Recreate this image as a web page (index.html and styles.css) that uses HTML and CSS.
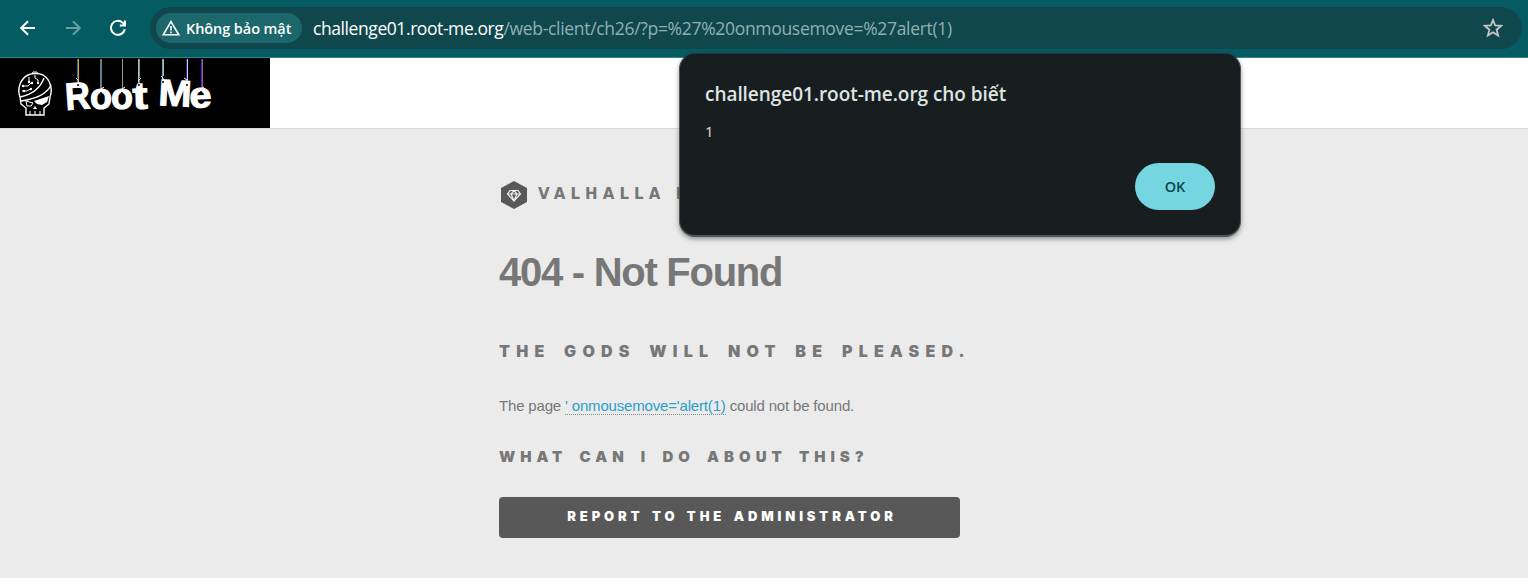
FILE: index.html
```html
<!DOCTYPE html>
<html lang="vi">
<head>
<meta charset="utf-8">
<title>404 - Not Found</title>
<link rel="stylesheet" href="styles.css">
</head>
<body>
<nav class="toolbar">
  <svg class="nav-icon" viewBox="0 0 20 20"><path d="M17 10H3.5M10 3.2L3.2 10L10 16.8"/></svg>
  <svg class="nav-icon dim" viewBox="0 0 20 20"><path d="M3 10H16.5M10 3.2L16.8 10L10 16.8"/></svg>
  <svg class="nav-icon" viewBox="0 0 20 20"><path d="M16.8 11.2A7 7 0 1 1 14.8 4.8L16.6 6.8M17 2.6V7.4H11.8"/></svg>
  <div class="address">
    <div class="chip">
      <svg class="warn" viewBox="0 0 18 16"><path d="M9 1.6L16.8 14.8H1.2Z"/><path d="M9 6V10.4M9 11.6V13.2"/></svg>
      <span>Không bảo mật</span>
    </div>
    <div class="url"><span class="host">challenge01.root-me.org</span><span class="path">/web-client/ch26/?p=%27%20onmousemove=%27alert(1)</span></div>
    <svg class="star" viewBox="0 0 20 20"><path d="M10 2L12.2 7.5L18.2 7.9L13.6 11.7L15.1 17.5L10 14.3L4.9 17.5L6.4 11.7L1.8 7.9L7.8 7.5Z"/></svg>
  </div>
</nav>
<header class="site-header">
  <svg class="logo" viewBox="0 0 270 70">
    <g class="skull">
      <path d="M20 39C17 31 20 21 28 17C32 15 39 15 43 17C50 21 53 31 50 39L49 46L44 50V57H26V50L21 46Z"/>
      <path d="M20 39C30 37 40 31 44 20M21 43C35 41 47 36 51 27"/>
      <path class="thin" d="M32 16L33 14H37L38 16M35 17V20L38 22V25M29 19V24M23 28H28L31 25M22 33H27L30 31M30 57V53M35 57V53M40 57V53"/>
      <path class="fill" d="M34 43L49 38L47 44L42 47L37 46ZM35 48L37 51H33Z"/>
      <path class="thin" d="M26 43L33 45L31 48H27Z"/>
      <circle class="fill" cx="29" cy="24" r="1.2"/><circle class="fill" cx="32" cy="25" r="1.2"/><circle class="fill" cx="23" cy="28" r="1.2"/><circle class="fill" cx="38" cy="25" r="1.2"/><circle class="fill" cx="31" cy="31" r="1.2"/><circle class="fill" cx="24" cy="33" r="1.2"/>
    </g>
    <g class="strings">
      <path stroke="#e4a021" d="M78.5 1V24"/><path stroke="#2070a8" d="M77.5 1V20"/>
      <path stroke="#238ed8" d="M100.5 1V31"/><path stroke="#8f7440" d="M101.5 1V31"/>
      <path stroke="#8b9b9b" d="M122.5 1V31"/>
      <path stroke="#86c9e8" d="M138.5 1V24"/><path stroke="#a98a58" d="M139.5 1V20"/>
      <path stroke="#4ba7e2" d="M162.5 1V21"/><path stroke="#c7b48c" d="M163.5 1V18"/>
      <path stroke="#2020c0" d="M186.5 1V22"/><path stroke="#d8d2c0" d="M187.5 1V22"/>
      <path stroke="#3c28d8" d="M201.5 1V30"/><path stroke="#b05c80" d="M202.5 1V30"/>
    </g>
    <g class="word">
      <text transform="translate(66 52) rotate(-4)" font-size="38" textLength="25" lengthAdjust="spacingAndGlyphs">R</text>
      <text transform="translate(90 51)" font-size="36" textLength="22" lengthAdjust="spacingAndGlyphs">o</text>
      <text transform="translate(111 51)" font-size="36" textLength="22" lengthAdjust="spacingAndGlyphs">o</text>
      <text transform="translate(133 51) rotate(-2)" font-size="38" textLength="15" lengthAdjust="spacingAndGlyphs">t</text>
      <text transform="translate(158 47) rotate(3)" font-size="37" textLength="33" lengthAdjust="spacingAndGlyphs">M</text>
      <text transform="translate(190 50) rotate(-3)" font-size="36" textLength="22" lengthAdjust="spacingAndGlyphs">e</text>
    </g>
    <g class="knots">
      <path d="M76 20L78 22V25M104 29L101 31V34M125 29L122 31V34M141 20L139 22V26M161 18L163 20V24M184 20L187 22V25M204 29L201 31V34"/>
    </g>
    <g class="holes"><circle cx="78" cy="27" r="1"/><circle cx="101" cy="35" r="1"/><circle cx="122" cy="35" r="1"/><circle cx="139" cy="27" r="1"/><circle cx="163" cy="24" r="1"/><circle cx="187" cy="27" r="1"/><circle cx="201" cy="34" r="1"/></g>
  </svg>
</header>
<main class="content">
  <div class="brand">
    <svg class="badge" viewBox="0 0 28 30"><path class="hex" d="M14 1L27 8V22L14 29L1 22V8Z"/><path class="gem" d="M10 10.5H18L20.5 14L14 21L7.5 14ZM7.5 14H20.5M11 14L14 20.5L17 14L14 10.5Z"/></svg>
    <span class="brand-name">VALHALLA INC</span>
  </div>
  <h1>404 - Not Found</h1>
  <h2 class="gods">THE GODS WILL NOT BE PLEASED.</h2>
  <p>The page <a>' onmousemove='alert(1)</a> could not be found.</p>
  <h2 class="what">WHAT CAN I DO ABOUT THIS?</h2>
  <button class="report">REPORT TO THE ADMINISTRATOR</button>
</main>
<div class="dialog">
  <div class="dialog-title">challenge01.root-me.org cho biết</div>
  <div class="dialog-text">1</div>
  <button class="ok">OK</button>
</div>
</body>
</html>
```

FILE: styles.css
```css
* { box-sizing: border-box; }
body { margin: 0; height: 578px; overflow: hidden; background: #ebebeb; font-family: "Liberation Sans", Arial, sans-serif; color: #777; }
.toolbar { height: 58px; background: #045c62; border-bottom: 1px solid #35858a; display: flex; align-items: center; padding: 0 6px 1px 18px; }
.nav-icon { width: 20px; height: 20px; margin-right: 25px; fill: none; stroke: #fff; stroke-width: 2; flex: none; }
.nav-icon.dim { stroke: #6a9fa3; }
.address { flex: 1; height: 42px; margin-left: -3px; border-radius: 21px; background: #10474d; display: flex; align-items: center; padding: 0 19px 0 6px; font-family: "Open Sans", "Noto Sans", sans-serif; }
.chip { width: 146px; height: 30px; border-radius: 15px; background: #1c676b; display: flex; align-items: center; padding-left: 6px; color: #fff; font-size: 14.5px; font-weight: 600; letter-spacing: -0.08px; white-space: nowrap; }
.warn { width: 18px; height: 16px; margin-right: 6px; fill: none; stroke: #fff; stroke-width: 1.6; flex: none; }
.url { flex: 1; margin-left: 11px; font-size: 17.5px; white-space: nowrap; }
.host { color: #fff; letter-spacing: -0.42px; }
.path { color: #91b0b3; letter-spacing: -0.31px; }
.star { width: 20px; height: 20px; fill: none; stroke: #c7c7c7; stroke-width: 1.8; }
.site-header { height: 71px; background: #fff; border-bottom: 1px solid #dcdcdc; display: flex; }
.logo { width: 270px; height: 70px; background: #000; }
.skull { fill: none; stroke: #fff; stroke-width: 1.4; }
.skull .thin { stroke-width: 1; }
.skull .fill { fill: #fff; stroke: none; }
.strings { stroke-width: 1; fill: none; }
.word { fill: #fff; stroke: #fff; stroke-width: 1.1; font-family: "Liberation Sans", Arial, sans-serif; font-weight: 700; }
.knots { fill: none; stroke: #fff; stroke-width: 1; }
.content { width: 530px; margin-left: 499px; padding-top: 51px; }
.brand { height: 30px; display: flex; align-items: center; white-space: nowrap; padding-left: 1px; }
.badge { width: 28px; height: 30px; margin-right: 10px; }
.hex { fill: #585858; }
.gem { fill: none; stroke: #eee; stroke-width: 1.2; }
.brand-name { font: 700 15px/28px "DejaVu Sans", Verdana, sans-serif; letter-spacing: 5.1px; padding-bottom: 2px; }
h1 { margin: 38px 0 0; font-size: 40px; line-height: 48px; letter-spacing: -1.27px; }
h2 { margin: 0; font-family: Inter, Arial, sans-serif; font-weight: 900; white-space: nowrap; }
.gods { margin-top: 44px; font-size: 16px; line-height: 22px; letter-spacing: 6.25px; word-spacing: 4.1px; }
p { margin: 34px 0 0; font-size: 15px; line-height: 20px; letter-spacing: -0.17px; white-space: nowrap; }
p a { color: #2a9fc9; border-bottom: 1px dotted #888; }
.what { margin-top: 31px; font-size: 15px; line-height: 20px; letter-spacing: 5px; word-spacing: 4.2px; }
.report { display: block; margin-top: 30px; width: 461px; height: 41px; border: 0; border-radius: 4px; background: #585858; color: #fff; font: 900 13px/20px Inter, Arial, sans-serif; letter-spacing: 3.9px; word-spacing: 2px; padding: 0 0 3px 5px; }
.dialog { position: absolute; left: 679px; top: 53px; width: 562px; height: 184px; border: 1px solid #4a5558; border-bottom-width: 2px; border-top-color: #2b3639; border-radius: 16px; background: #181d1f; box-shadow: 0 2px 5px rgba(0,0,0,.4); padding: 27px 25px 25px; display: flex; flex-direction: column; font-family: "Open Sans", "Noto Sans", sans-serif; color: #dee4e4; }
.dialog-title { font-size: 19px; line-height: 26px; font-weight: 600; white-space: nowrap; letter-spacing: -0.05px; }
.dialog-text { margin-top: 14px; font-size: 15px; line-height: 20px; }
.ok { margin: auto 0 0 auto; width: 80px; height: 47px; border: 0; border-radius: 24px; background: #75d6e2; color: #0b454b; font: 600 14.5px/20px "Open Sans", sans-serif; }
```
